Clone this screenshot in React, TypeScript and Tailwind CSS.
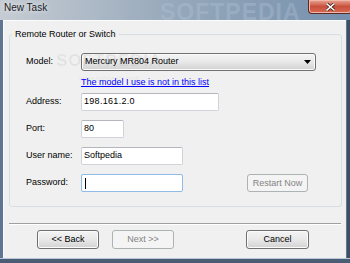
import type { ReactNode } from 'react';

interface WinButtonProps {
  children: ReactNode;
  disabled?: boolean;
  className?: string;
}

function WinButton({ children, disabled, className = '' }: WinButtonProps) {
  const look = disabled
    ? 'border-[#adb2b5] bg-[#f4f4f4] text-[#838383]'
    : 'border-[#707070] bg-gradient-to-b from-[#f4f4f4] via-[#e8e8e8] to-[#d2d2d2] shadow-[inset_0_0_0_1px_#fbfbfb] text-black';
  return (
    <button
      type="button"
      disabled={disabled}
      className={`flex items-center justify-center border rounded-[3px] leading-none ${look} ${className}`}
    >
      {children}
    </button>
  );
}

function TextBox({ value, className = '', focused }: { value?: string; className?: string; focused?: boolean }) {
  return (
    <div
      className={`h-[18px] flex items-center pl-[2px] bg-white border rounded-[2px] ${
        focused ? 'border-[#8fbbe6]' : 'border-[#d0d3d8] border-t-[#b3b6bc]'
      } ${className}`}
    >
      {value}
      {focused && <span className="ml-[1px] w-px h-[11px] bg-black" />}
    </div>
  );
}

export default function App() {
  return (
    <div className="relative w-[350px] h-[263px] overflow-hidden flex flex-col bg-[#5f7591] font-['Liberation_Sans',Arial,sans-serif] text-[9px] text-black">
      {/* Title bar */}
      <div className="relative h-[20px] shrink-0 flex items-start overflow-hidden bg-gradient-to-r from-[#c6ccd3] via-[#96a8bb] to-[#7690ad]">
        <span className="pl-[4px] pt-[2px] text-[10px] leading-[12px] text-[#1b1b1b] [text-shadow:0_0_5px_#fff]">
          New Task
        </span>
        <span className="absolute left-[160px] top-[-5px] text-[23px] font-bold tracking-[1px] text-[#b4c6d8]/35 pointer-events-none">
          SOFTPEDIA
        </span>
        <div className="ml-auto mr-[-2px] w-[44px] h-[14px] flex items-center justify-center rounded-b-[4px] border border-t-0 border-[#5b2a24] bg-gradient-to-b from-[#e7a594] via-[#c8503d] to-[#d86a52] shadow-[inset_0_0_0_1px_#f0b7a8]">
          <svg width="9" height="8" viewBox="0 0 9 8">
            <path d="M1 1l7 6M8 1L1 7" stroke="#3a1410" strokeWidth="3" strokeLinecap="square" />
            <path d="M1 1l7 6M8 1L1 7" stroke="#fff" strokeWidth="1.6" strokeLinecap="square" />
          </svg>
        </div>
      </div>

      {/* Client area */}
      <div className="flex">
        <div className="relative ml-[3px] w-[343px] h-[238px] flex flex-col bg-[#f0f0f0] border-t border-l border-[#fafbfc]">
          {/* watermark */}
          <div className="absolute left-[52px] top-[27px] flex flex-col items-center pointer-events-none">
            <span className="text-[17px] font-bold tracking-[1px] text-black/[0.06]">SOFTPEDIA</span>
            <span className="text-[7px] text-black/[0.07]">www.softpedia.com</span>
          </div>

          <fieldset className="ml-[5px] mt-[7px] w-[333px] h-[179px] border border-[#d5dfe5] rounded-[3px]">
            <legend className="ml-[2px] px-[3px] leading-[12px]">Remote Router or Switch</legend>

            <div className="mt-[13px] flex items-center h-[18px]">
              <span className="pl-[16px] w-[71px]">Model:</span>
              <div className="w-[235px] h-[18px] flex items-center pl-[3px] border border-[#707070] rounded-[3px] bg-gradient-to-b from-[#f4f4f4] via-[#e8e8e8] to-[#d2d2d2] shadow-[inset_0_0_0_1px_#fbfbfb]">
                Mercury MR804 Router
                <svg className="ml-auto mr-[4px]" width="7" height="4" viewBox="0 0 7 4">
                  <path d="M0 0h7L3.5 4z" fill="#000" />
                </svg>
              </div>
            </div>

            <div className="mt-[5px] h-[12px] pl-[71px] leading-[12px]">
              <span className="text-[#0000ff] underline">The model I use is not in this list</span>
            </div>

            <div className="mt-[5px] flex items-center">
              <span className="pl-[16px] w-[71px]">Address:</span>
              <TextBox value="198.161.2.0" className="w-[138px] tracking-[0.3px]" />
            </div>

            <div className="mt-[9px] flex items-center">
              <span className="pl-[16px] w-[71px]">Port:</span>
              <TextBox value="80" className="w-[43px]" />
            </div>

            <div className="mt-[9px] flex items-center">
              <span className="pl-[16px] w-[71px]">User name:</span>
              <TextBox value="Softpedia" className="w-[102px]" />
            </div>

            <div className="mt-[9px] flex items-center">
              <span className="pl-[16px] w-[71px]">Password:</span>
              <TextBox focused className="w-[102px]" />
              <WinButton disabled className="ml-[64px] w-[61px] h-[18px]">
                Restart Now
              </WinButton>
            </div>
          </fieldset>

          <div className="mt-[16px] ml-[5px] w-[332px] border-t border-b border-t-[#a0a0a0] border-b-white" />

          <div className="mt-[5px] pl-[33px] flex">
            <WinButton className="w-[62px] h-[19px]">{'<< Back'}</WinButton>
            <WinButton disabled className="ml-[13px] w-[62px] h-[19px]">
              {'Next >>'}
            </WinButton>
            <WinButton className="ml-[72px] w-[63px] h-[19px]">Cancel</WinButton>
          </div>
        </div>
        <div className="ml-[1px] w-[3px] h-[238px] bg-[#3f4f62]" />
      </div>

      <div className="h-[5px] shrink-0 border-t border-[#b8c7d7] bg-[#4a5d74]" />
    </div>
  );
}
